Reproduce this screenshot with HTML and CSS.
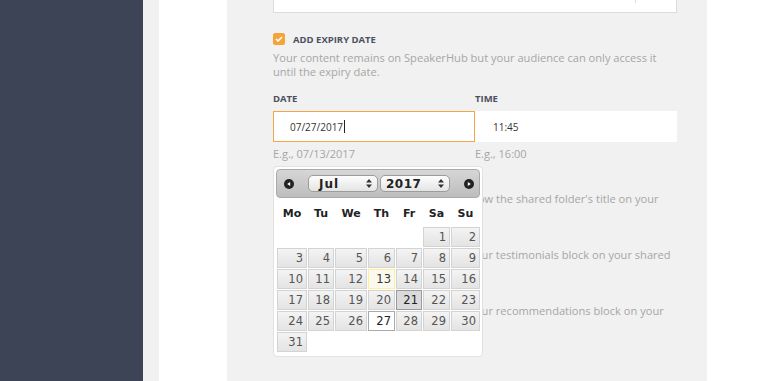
FILE: index.html
```html
<!DOCTYPE html>
<html lang="en">
<head>
    <meta charset="UTF-8">
    <meta name="viewport" content="width=device-width, initial-scale=1.0">
    <title>Share folder settings</title>
    <link rel="stylesheet" href="styles.css">
</head>
<body>
    <div class="app">
        <aside class="sidebar"></aside>
        <main class="main">
            <div class="card">
                <section class="panel">
                    <!-- field above, scrolled mostly out of view -->
                    <div class="top-field">
                        <span class="top-field-text">Pricing</span>
                        <span class="top-field-divider"></span>
                    </div>

                    <!-- Expiry -->
                    <label class="check-row">
                        <span class="checkbox checked">
                            <svg width="8" height="6" viewBox="0 0 8 6"><path d="M1 3l2 2 4-4" fill="none" stroke="#fff" stroke-width="1.6"/></svg>
                        </span>
                        <span class="check-label">Add expiry date</span>
                    </label>
                    <p class="help">Your content remains on SpeakerHub but your audience can only access it until the expiry date.</p>

                    <div class="datetime">
                        <div class="date-col">
                            <div class="field-label">Date</div>
                            <div class="input focused">07/27/2017<span class="caret"></span></div>
                            <div class="hint">E.g., 07/13/2017</div>

                            <!-- Datepicker popup -->
                            <div class="datepicker">
                                <div class="dp-header">
                                    <span class="dp-nav">
                                        <svg width="10" height="10" viewBox="0 0 10 10"><circle cx="5" cy="5" r="5" fill="#222"/><path d="M3.2 5L6.2 3v4z" fill="#fff"/></svg>
                                    </span>
                                    <span class="dp-select month">Jul
                                        <svg class="dp-arrows" width="6" height="9" viewBox="0 0 6 9"><path d="M3 0l3 3.4H0zM3 9L0 5.6h6z" fill="#333"/></svg>
                                    </span>
                                    <span class="dp-select year">2017
                                        <svg class="dp-arrows" width="6" height="9" viewBox="0 0 6 9"><path d="M3 0l3 3.4H0zM3 9L0 5.6h6z" fill="#333"/></svg>
                                    </span>
                                    <span class="dp-nav next">
                                        <svg width="10" height="10" viewBox="0 0 10 10"><circle cx="5" cy="5" r="5" fill="#222"/><path d="M6.8 5L3.8 3v4z" fill="#fff"/></svg>
                                    </span>
                                </div>
                                <div class="dp-days">
                                    <span>Mo</span><span>Tu</span><span>We</span><span>Th</span><span>Fr</span><span>Sa</span><span>Su</span>
                                </div>
                                <div class="dp-grid">
                                    <a class="day first">1</a><a class="day">2</a>
                                    <a class="day">3</a><a class="day">4</a><a class="day">5</a><a class="day">6</a><a class="day">7</a><a class="day">8</a><a class="day">9</a>
                                    <a class="day">10</a><a class="day">11</a><a class="day">12</a><a class="day today">13</a><a class="day">14</a><a class="day">15</a><a class="day">16</a>
                                    <a class="day">17</a><a class="day">18</a><a class="day">19</a><a class="day">20</a><a class="day hover">21</a><a class="day">22</a><a class="day">23</a>
                                    <a class="day">24</a><a class="day">25</a><a class="day">26</a><a class="day active">27</a><a class="day">28</a><a class="day">29</a><a class="day">30</a>
                                    <a class="day">31</a>
                                </div>
                            </div>
                        </div>
                        <div class="time-col">
                            <div class="field-label">Time</div>
                            <div class="input">11:45</div>
                            <div class="hint">E.g., 16:00</div>
                        </div>
                    </div>

                    <!-- Share page options -->
                    <div class="option">
                        <label class="check-row">
                            <span class="checkbox"></span>
                            <span class="check-label">Show folder title</span>
                        </label>
                        <p class="help">Check this box if you would like us to show the shared folder's title on your shared page.</p>
                    </div>
                    <div class="option">
                        <label class="check-row">
                            <span class="checkbox"></span>
                            <span class="check-label">Show testimonials</span>
                        </label>
                        <p class="help">Check this box if you want us to show your testimonials block on your shared page.</p>
                    </div>
                    <div class="option">
                        <label class="check-row">
                            <span class="checkbox"></span>
                            <span class="check-label">Show recommendations</span>
                        </label>
                        <p class="help">Check this box if you want us to show your recommendations block on your shared page.</p>
                    </div>
                </section>
            </div>
        </main>
    </div>
</body>
</html>
```

FILE: styles.css
```css
body {
    margin: 0;
    font-family: "Open Sans", sans-serif;
    color: #333;
}
.app {
    display: flex;
    height: 381px;
    overflow: hidden;
}
.sidebar {
    flex: none;
    width: 143px;
    background-color: #3d4456;
}
.main {
    flex: 1;
    display: flex;
    background-color: #f1f1f1;
    padding-left: 16px;
}
.card {
    flex: 1;
    background-color: #fff;
    padding-left: 68px;
}
.panel {
    display: flow-root;
    width: 480px;
    height: 100%;
    box-sizing: border-box;
    background-color: #f1f1f1;
    padding: 0 30px 0 46px;
}

/* field cut off at the top */
.top-field {
    display: flex;
    align-items: center;
    height: 40px;
    margin-top: -27px;
    box-sizing: border-box;
    padding: 0 0 12px 23px;
    background-color: #fff;
    border: 1px solid #dcdcdc;
    font-size: 11px;
}
.top-field-divider {
    align-self: flex-start;
    margin-left: auto;
    width: 40px;
    height: 29px;
    border-left: 1px solid #dcdcdc;
}

/* checkboxes */
.check-row {
    display: flex;
    align-items: center;
    gap: 8px;
    height: 12px;
    margin-top: 20px;
}
.checkbox {
    display: flex;
    align-items: center;
    justify-content: center;
    width: 12px;
    height: 12px;
    box-sizing: border-box;
    border-radius: 2px;
    background-color: #fff;
    border: 1px solid #ccc;
}
.checkbox.checked {
    background-color: #f5a43a;
    border-color: #f5a43a;
}
.check-label {
    font-size: 9.5px;
    font-weight: 700;
    text-transform: uppercase;
    color: #4b505e;
}
.help {
    margin: 6px 0 0;
    font-size: 11.1px;
    line-height: 14px;
    color: #a6a6a6;
}

/* date and time */
.datetime {
    display: grid;
    grid-template-columns: 1fr 1fr;
    margin-top: 14px;
}
.date-col {
    position: relative;
}
.field-label {
    font-size: 9.5px;
    font-weight: 700;
    line-height: 12px;
    text-transform: uppercase;
    color: #4b505e;
}
.input {
    display: flex;
    align-items: center;
    height: 31px;
    margin-top: 6px;
    box-sizing: border-box;
    padding-left: 18px;
    background-color: #fff;
    font-size: 10px;
    color: #333;
}
.input.focused {
    border: 1px solid #f5a54a;
    padding-left: 16px;
}
.caret {
    width: 1px;
    height: 13px;
    margin-left: 1px;
    background-color: #222;
}
.hint {
    margin-top: 4px;
    font-size: 11px;
    line-height: 16px;
    color: #a6a6a6;
}

/* datepicker popup */
.datepicker {
    position: absolute;
    top: 73px;
    left: 0;
    z-index: 10;
    width: 210px;
    height: 191px;
    box-sizing: border-box;
    padding: 2px;
    background-color: #fff;
    border: 1px solid #e2e2e2;
    border-radius: 4px;
    font-family: "DejaVu Sans", Verdana, sans-serif;
}
.dp-header {
    display: flex;
    align-items: center;
    height: 29px;
    box-sizing: border-box;
    padding-left: 7px;
    border: 1px solid #aaa;
    border-radius: 4px;
    background: linear-gradient(#d6d6d6, #bdbdbd);
}
.dp-nav {
    display: flex;
    width: 10px;
    height: 10px;
}
.dp-nav.next {
    margin-left: 14px;
}
.dp-select {
    position: relative;
    display: flex;
    align-items: center;
    width: 70px;
    height: 17px;
    box-sizing: border-box;
    border: 1px solid #9c9c9c;
    border-radius: 5px;
    background: linear-gradient(#fdfdfd, #e4e4e4);
    font-size: 12px;
    font-weight: 700;
    color: #222;
}
.dp-select.month {
    margin-left: 14px;
    padding-left: 10px;
    letter-spacing: 1px;
}
.dp-select.year {
    margin-left: 2px;
    padding-left: 5px;
    letter-spacing: 0.5px;
}
.dp-arrows {
    position: absolute;
    right: 5px;
    top: 3px;
}
.dp-days,
.dp-grid {
    display: grid;
    grid-template-columns: 30px 26px 32px 27px 26px 27px 29px;
    column-gap: 1px;
    margin-left: 1px;
}
.dp-days {
    height: 29px;
    line-height: 31px;
    font-size: 11px;
    font-weight: 700;
    text-align: center;
    color: #222;
}
.dp-grid {
    row-gap: 1px;
}
.day {
    height: 20px;
    box-sizing: border-box;
    padding-right: 3px;
    border: 1px solid #d3d3d3;
    background: linear-gradient(#f4f4f4, #ebebeb 50%, #e4e4e4);
    font-size: 11.5px;
    line-height: 19px;
    text-align: right;
    color: #555;
}
.day.first {
    grid-column-start: 6;
}
.day.today {
    border-color: #fcefa1;
    background: #fbf9ee;
    color: #363636;
}
.day.hover {
    border-color: #999;
    background: #dadada;
    color: #212121;
}
.day.active {
    border-color: #aaa;
    background: #fff;
    color: #212121;
}

/* options under the date */
.option {
    margin-top: 10px;
}
.datetime + .option {
    margin-top: 12px;
}
.option .check-row {
    margin-top: 0;
}
```
